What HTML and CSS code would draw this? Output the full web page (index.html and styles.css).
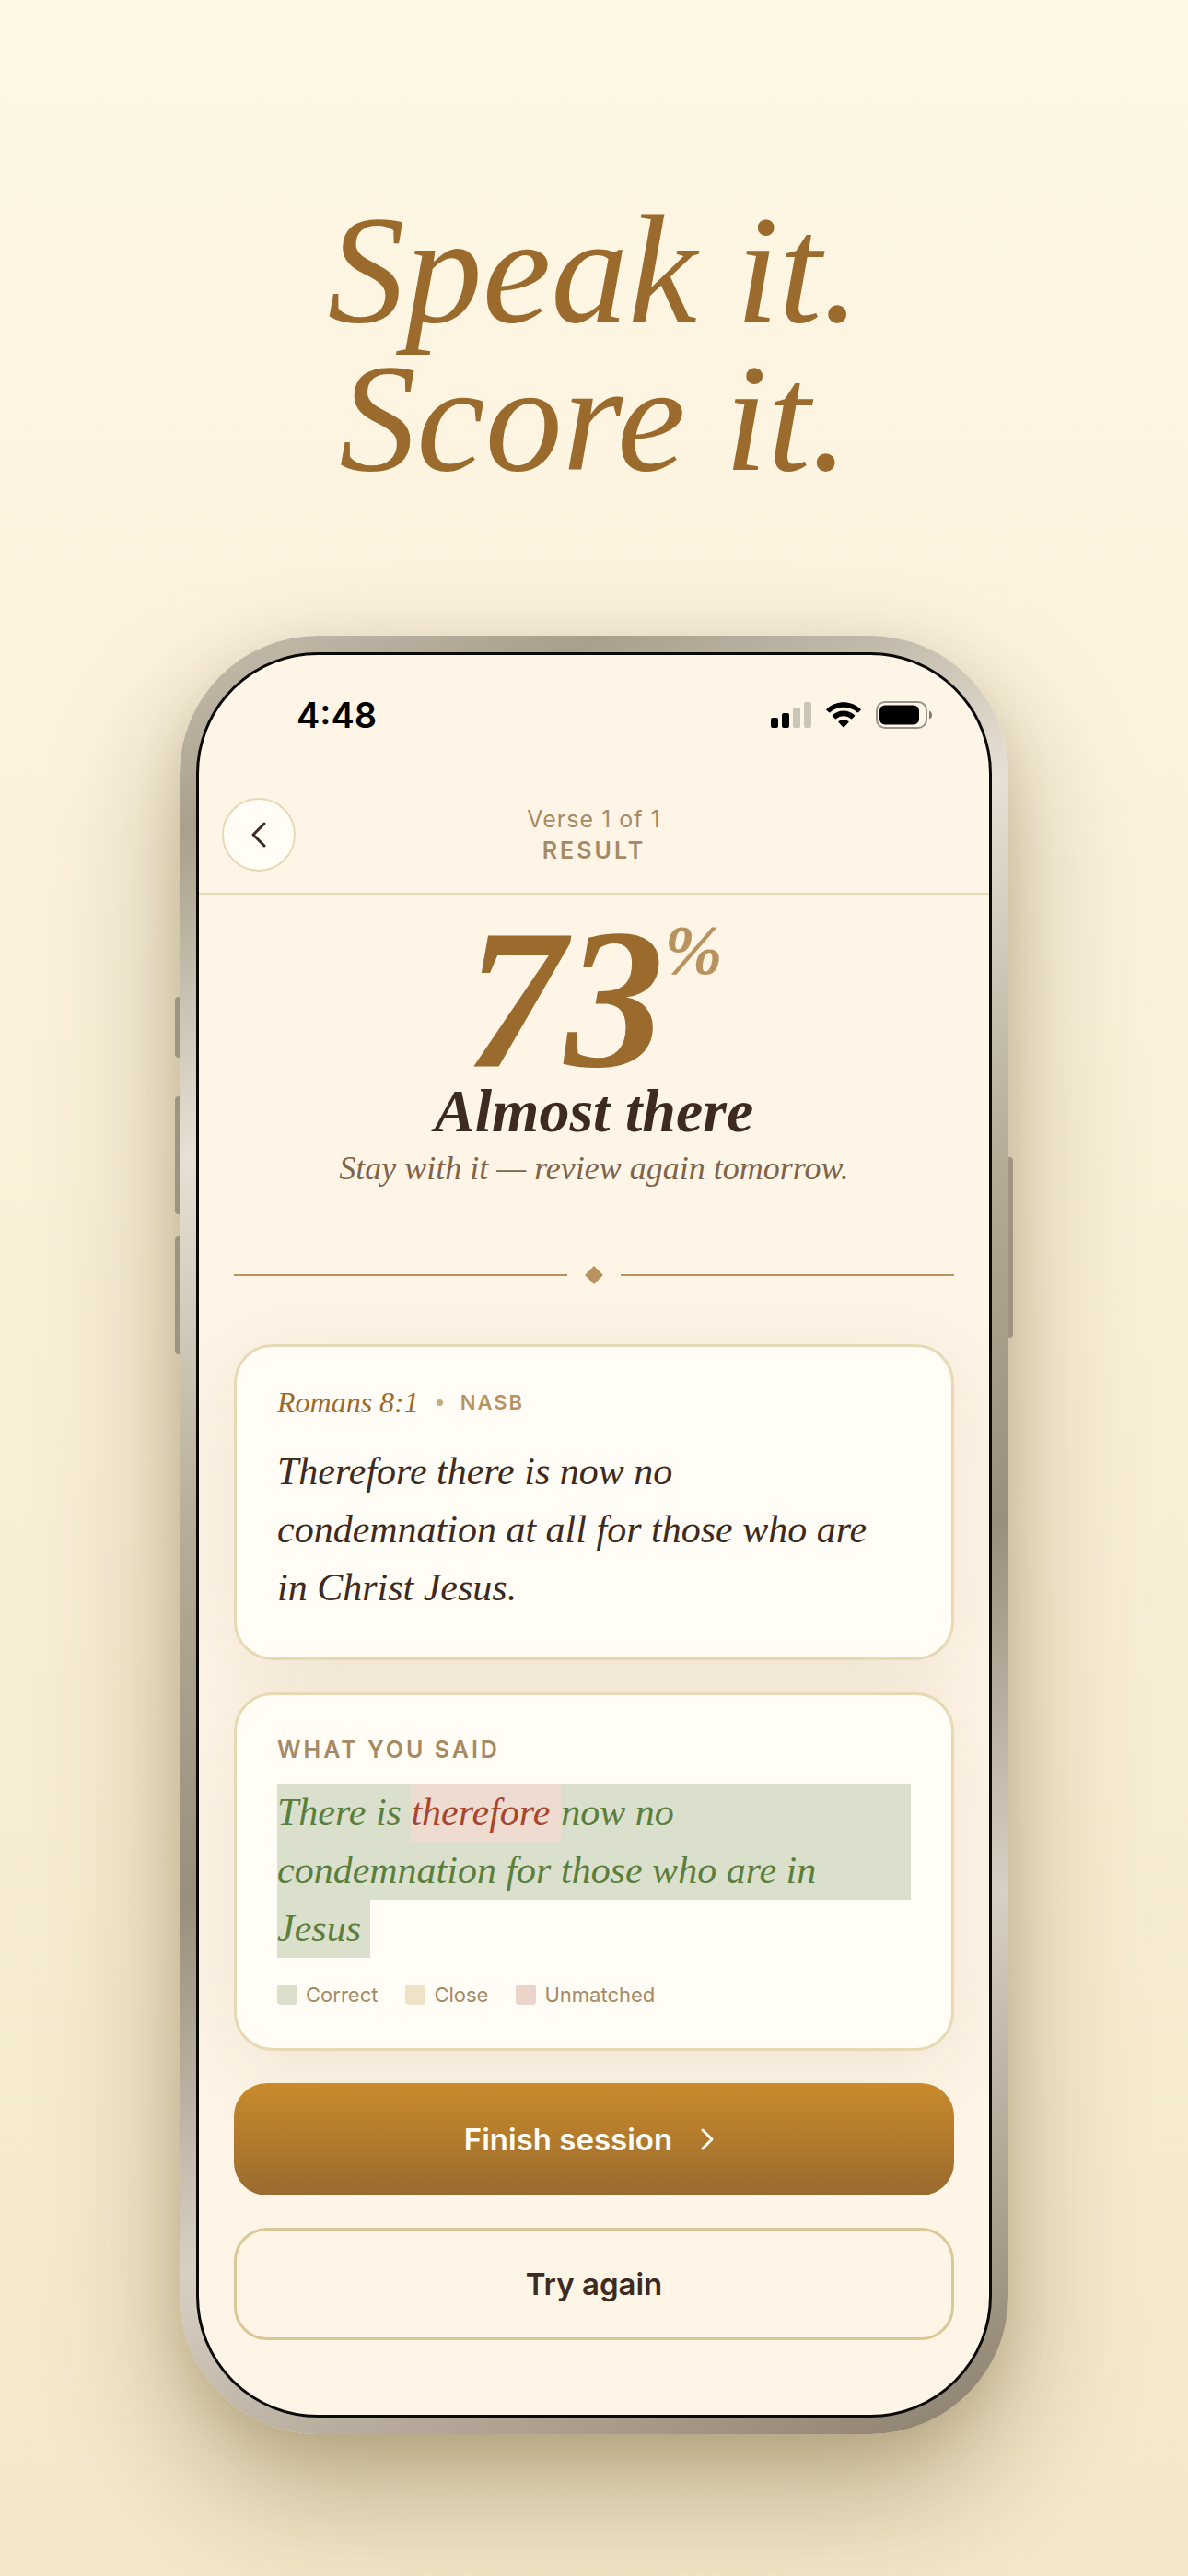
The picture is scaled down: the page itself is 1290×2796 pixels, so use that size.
FILE: index.html
```html
<!DOCTYPE html>
<html lang="en">
<head>
<meta charset="utf-8">
<meta name="viewport" content="width=device-width, initial-scale=1">
<title>Speak it. Score it.</title>
<link rel="stylesheet" href="styles.css">
</head>
<body>
<main class="poster">
  <h1 class="headline">Speak it.<br>Score it.</h1>

  <div class="phone">
    <span class="key key-action"></span>
    <span class="key key-up"></span>
    <span class="key key-down"></span>
    <span class="key key-power"></span>

    <div class="screen">
      <div class="status">
        <span class="time">4:48</span>
        <div class="status-icons">
          <svg width="44" height="28" viewBox="0 0 44 28" aria-label="Signal">
            <rect x="0" y="17" width="8" height="11" rx="2"/>
            <rect x="12" y="12" width="8" height="16" rx="2"/>
            <rect x="24" y="6" width="8" height="22" rx="2" opacity=".2"/>
            <rect x="36" y="0" width="8" height="28" rx="2" opacity=".2"/>
          </svg>
          <svg width="38" height="28" viewBox="0 0 38 28" aria-label="Wi-Fi">
            <path d="M19 0.3C26.200 .3 32.800 3.200 37.500 7.700Q38 8.300 37.500 8.900L34.800 11.300Q34.200 11.700 33.700 11.300C29.700 7.700 24.700 5.800 19 5.800S8.300 7.700 4.300 11.300Q3.800 11.700 3.200 11.300L.5 8.900Q0 8.300 .5 7.700C5.200 3.200 11.800 .3 19 .3Z"/>
            <path d="M19 9.600C23.600 9.600 27.800 11.300 31 14.200Q31.500 14.800 31 15.400L28 18.200Q27.500 18.600 27 18.200C24.800 16.200 22 15.200 19 15.200S13.200 16.200 11 18.200Q10.500 18.600 10 18.200L7 15.400Q6.500 14.800 7 14.200C10.200 11.300 14.400 9.600 19 9.600Z"/>
            <path d="M19 19C21.200 19 23 19.700 24.500 21Q25 21.500 24.500 22L19.600 27.300Q19 27.800 18.400 27.300L13.500 22Q13 21.500 13.500 21C15 19.700 16.800 19 19 19Z"/>
          </svg>
          <svg width="61" height="30" viewBox="0 0 61 30" aria-label="Battery">
            <rect x="1" y="1" width="54" height="28" rx="9" fill="none" stroke="#000" stroke-width="2" opacity=".4"/>
            <rect x="4" y="4.500" width="43" height="21" rx="6"/>
            <path d="M58 10.500Q61 12 61 15T58 19.500Z" opacity=".5"/>
          </svg>
        </div>
      </div>

      <header class="bar">
        <button class="back" type="button" aria-label="Back">
          <svg width="28" height="28" viewBox="0 0 28 28"><path d="M20 2L8 14L20 26"/></svg>
        </button>
        <div class="bar-text">
          <p class="step">Verse 1 of 1</p>
          <h2 class="label">RESULT</h2>
        </div>
      </header>

      <div class="content">
        <section class="score">
          <p class="score-value">73<span class="percent">%</span></p>
          <h3 class="verdict">Almost there</h3>
          <p class="advice">Stay with it — review again tomorrow.</p>
        </section>

        <div class="divider"><span class="diamond"></span></div>

        <section class="card verse-card">
          <div class="reference">
            <span class="book">Romans 8:1</span>
            <span class="dot"></span>
            <span class="version">NASB</span>
          </div>
          <p class="verse">Therefore there is now no<br>condemnation at all for those who are<br>in Christ Jesus.</p>
        </section>

        <section class="card said-card">
          <h3 class="label">WHAT YOU SAID</h3>
          <p class="verse said">
            <span class="line">There is <mark class="miss">therefore </mark>now no</span>
            <span class="line">condemnation for those who are in</span>
            <span class="line last">Jesus </span>
          </p>
          <ul class="legend">
            <li class="correct">Correct</li>
            <li class="close">Close</li>
            <li class="unmatched">Unmatched</li>
          </ul>
        </section>

        <button class="action primary" type="button">Finish session
          <svg width="30" height="24" viewBox="0 0 30 24"><path d="M7 2L17 12L7 22"/></svg>
        </button>
        <button class="action secondary" type="button">Try again</button>
      </div>
    </div>
  </div>
</main>
</body>
</html>
```
FILE: styles.css
```css
:root {
  --serif: Georgia, "Liberation Serif", serif;
  --sans: Inter, "Liberation Sans", sans-serif;
  --bronze: #9a6b2d;
  --sand: #b8935f;
  --taupe: #a58a65;
  --ink: #3d2a20;
  --line: #e8d9b5;
  --paper: #fffdf5;
  --green: #dbe0cd;
}

* { box-sizing: border-box; }

body {
  margin: 0;
  background: linear-gradient(180deg, #fef7e5 0%, #fbf2dc 35%, #f3e8ca 100%);
  font-family: var(--sans);
  color: var(--ink);
}

h1, h2, h3, p, ul { margin: 0; padding: 0; }
button { font: inherit; color: inherit; cursor: pointer; }

.poster {
  display: flex;
  flex-direction: column;
  align-items: center;
  gap: 156px;
  min-height: 100vh;
  padding: 212px 15% 155px;
  overflow: hidden;
}

.headline {
  font: italic 400 168px/161px var(--serif);
  color: var(--bronze);
  text-align: center;
}

/* Device frame */
.phone {
  position: relative;
  width: 100%;
  max-width: 900px;
  padding: 18px;
  border-radius: 150px;
  background: linear-gradient(155deg, #c8beb0 0%, #a8a08c 9%, #e8e0d4 24%, #b3ab96 42%, #9a8e7c 58%, #d8d0c4 75%, #a89c8a 91%, #8a7e6e 100%);
  box-shadow: 0 60px 140px rgba(90, 65, 20, .38), 0 16px 50px rgba(90, 65, 20, .12);
}

.key {
  position: absolute;
  left: -5px;
  width: 5px;
  height: 128px;
  border-radius: 4px 0 0 4px;
  background: #9f9382;
}
.key-action { top: 392px; height: 66px; }
.key-up { top: 500px; }
.key-down { top: 652px; }
.key-power { top: 566px; left: auto; right: -5px; height: 196px; border-radius: 0 4px 4px 0; }

.screen {
  border: 3px solid #0a0a0a;
  border-radius: 132px;
  background: #fef5e7;
  overflow: hidden;
}

.status {
  display: flex;
  justify-content: space-between;
  align-items: center;
  height: 130px;
  padding: 0 62px 0 106px;
}
.time { font-size: 38px; font-weight: 600; color: #000; }
.status-icons { display: flex; align-items: center; gap: 16px; }

.bar {
  display: grid;
  grid-template-columns: 80px 1fr 80px;
  align-items: center;
  height: 130px;
  padding: 2px 25px 0;
  border-bottom: 2px solid var(--line);
}
.back {
  display: grid;
  place-items: center;
  width: 80px;
  height: 80px;
  padding: 0;
  border: 2px solid var(--line);
  border-radius: 50%;
  background: var(--paper);
}
.back svg, .primary svg { fill: none; stroke: currentColor; stroke-width: 3; stroke-linecap: round; stroke-linejoin: round; }
.bar-text { text-align: center; color: var(--taupe); }
.step { font-size: 25px; line-height: 34px; letter-spacing: 1px; }
.label { font-size: 25px; line-height: 34px; font-weight: 600; letter-spacing: 3px; color: var(--taupe); }

.content {
  display: flex;
  flex-direction: column;
  gap: 35px;
  padding: 22px 38px 81px;
}

.score { text-align: center; font-family: var(--serif); font-style: italic; }
.score-value {
  display: flex;
  justify-content: center;
  font-size: 216px;
  line-height: 184px;
  font-weight: 700;
  color: var(--bronze);
}
.percent { font-size: 76px; line-height: 76px; color: var(--sand); }
.verdict { font-size: 66px; line-height: 58px; font-weight: 700; }
.advice { font-size: 36px; line-height: 66px; color: #7d644a; }

.divider {
  display: flex;
  align-items: center;
  gap: 22px;
  height: 72px;
  margin: 12px 0 4px;
}
.divider::before, .divider::after { content: ""; flex: 1; height: 2px; background: var(--sand); }
.diamond { width: 14px; height: 14px; background: var(--sand); transform: rotate(45deg); }

.card {
  padding: 40px 44px;
  border: 3px solid var(--line);
  border-radius: 42px;
  background: var(--paper);
  box-shadow: 0 20px 90px rgba(120, 80, 30, .1);
}
.verse-card { padding-bottom: 44px; }

.reference { display: flex; align-items: center; gap: 19px; height: 40px; }
.book { font: italic 32px/40px var(--serif); color: var(--bronze); }
.dot { width: 7px; height: 7px; border-radius: 50%; background: var(--sand); opacity: .8; }
.version { font-size: 22px; font-weight: 600; letter-spacing: 2px; color: var(--sand); }

.verse { font: italic 42px/63px var(--serif); }
.verse-card .verse { margin-top: 24px; }

.said-card { padding-top: 42px; }
.said { margin-top: 20px; color: #5a7f3c; }
.line { display: block; background: var(--green); }
.last { width: fit-content; padding-right: 10px; }
.miss { display: inline-block; padding-right: 12px; background: #eedcd1; color: #a8452c; }

.legend {
  display: flex;
  gap: 30px;
  margin-top: 22px;
  list-style: none;
  font-size: 22px;
  line-height: 36px;
  color: var(--taupe);
}
.legend li { display: flex; align-items: center; gap: 9px; }
.legend li::before { content: ""; width: 22px; height: 22px; border-radius: 4px; background: var(--green); }
.legend .close::before { background: #f0e2c6; }
.legend .unmatched::before { background: #ebd5ca; }

.action {
  display: flex;
  justify-content: center;
  align-items: center;
  gap: 26px;
  height: 122px;
  padding: 0;
  border: 0;
  border-radius: 36px;
  font-size: 33px;
  font-weight: 600;
}
.primary { background: linear-gradient(180deg, #c98a2b, #9a6b2f); color: var(--paper); }
.secondary { border: 3px solid #dac897; background: transparent; }
```
